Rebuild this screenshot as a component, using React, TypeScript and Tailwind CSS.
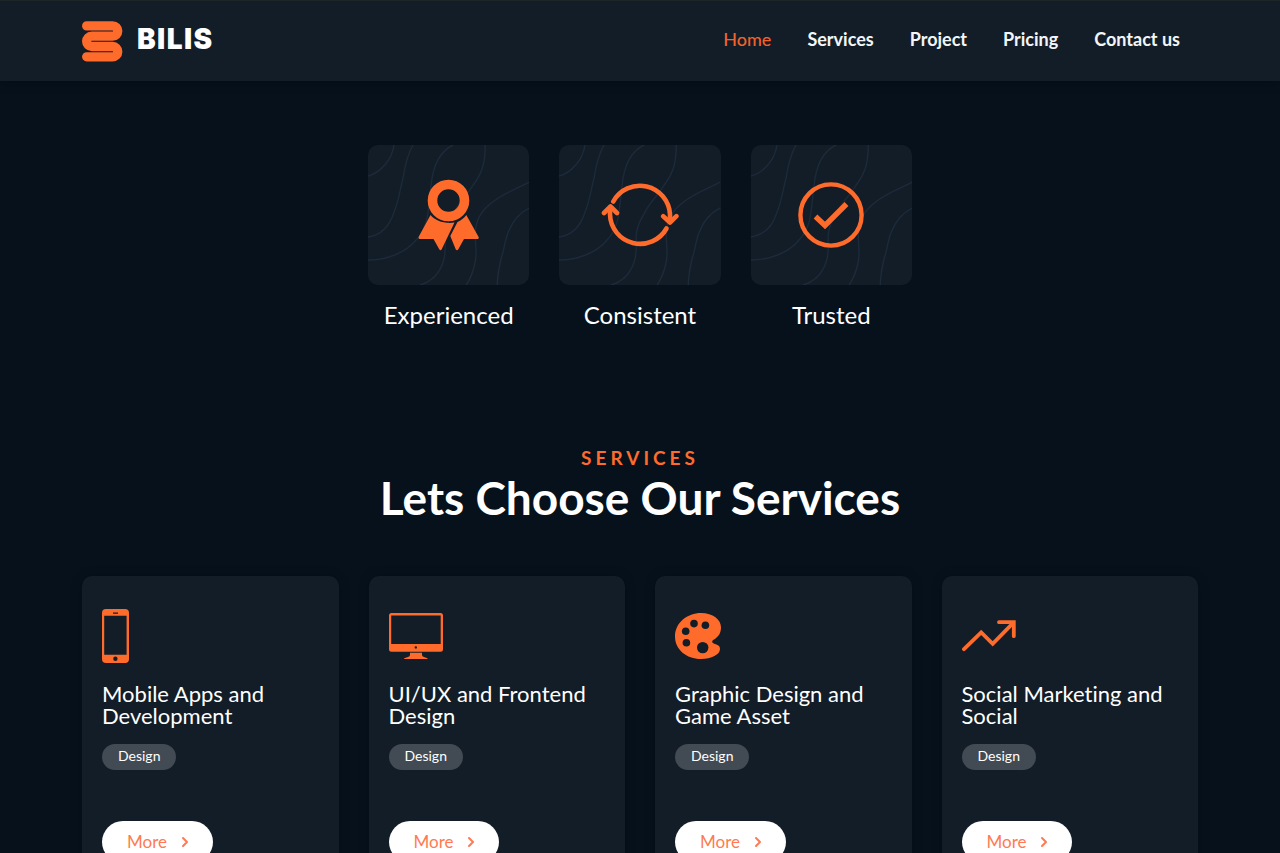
import type { ReactNode } from "react";
import { ChevronRight } from "lucide-react";

const navLinks = ["Home", "Services", "Project", "Pricing", "Contact us"];

function Logo() {
  return (
    <svg width="41" height="41" viewBox="0 0 41 41" fill="none" aria-hidden="true">
      <path
        d="M4.700 4.900H30.600a5.150 5.150 0 0 1 0 10.300H9.800a5.150 5.150 0 0 0 0 10.300H30.600a5.150 5.150 0 0 1 0 10.300H4.700"
        stroke="#ff6b2b"
        strokeWidth="9.300"
        strokeLinecap="round"
      />
    </svg>
  );
}

function Contours() {
  return (
    <svg
      className="absolute inset-0 h-full w-full"
      viewBox="0 0 161 140"
      preserveAspectRatio="none"
      fill="none"
      stroke="#1c2a3a"
      strokeWidth="1.400"
      aria-hidden="true"
    >
      <path d="M0 31C12 28 24 15 26 0" />
      <path d="M0 92C14 90 22 80 26 67C31 55 32 44 35 33C37 20 39 10 45 0" />
      <path d="M0 115C20 115 38 107 48 95C62 80 60 60 63 40C65 20 72 6 85 0" />
      <path d="M117 0C117 18 114 28 105 40C99 50 91 57 87 65C82 74 78 80 77 90C77 105 78 108 75 117C71 129 62 137 52 140" />
      <path d="M161 37C148 44 135 48 123 58C112 67 107 76 107 90C107 100 109 108 107 117C105 127 102 134 98 140" />
      <path d="M161 63C150 68 144 77 140 87C136 97 136 105 133 113C131 122 129 130 129 140" />
    </svg>
  );
}

function AwardIcon() {
  return (
    <svg width="61" height="72" viewBox="0 0 61 72" aria-hidden="true">
      <circle cx="30.500" cy="21.500" r="16" fill="none" stroke="#ff6b2b" strokeWidth="9.600" />
      <path
        d="M12.500 36C17 41.500 26 45 36.500 43.600L23.600 70.500Q22.500 72 21.400 70.500L15.500 60H1.500Q0 59.500 .6 58Z"
        fill="#ff6b2b"
      />
      <path
        d="M48.300 36C46 39 43 41.600 39.500 42.900L32.300 57L37.800 70.500Q39 72 40.200 70.500L46 60H59.800Q61.300 59.500 60.600 58Z"
        fill="#ff6b2b"
      />
    </svg>
  );
}

function CycleIcon() {
  return (
    <svg
      width="78"
      height="66"
      viewBox="0 0 78 66"
      fill="none"
      stroke="#ff6b2b"
      strokeWidth="4.600"
      strokeLinecap="round"
      strokeLinejoin="round"
      aria-hidden="true"
    >
      <path d="M12.300 19.500A30.200 30.200 0 0 1 69 32.500V40" />
      <path d="M62.200 34.200L69 40.500L75.400 34.200" />
      <path d="M65.500 46.500A30.200 30.200 0 0 1 9 32.500V26" />
      <path d="M3 31L9.500 24.500L16 31" />
    </svg>
  );
}

function CheckIcon() {
  return (
    <svg width="66" height="66" viewBox="0 0 66 66" fill="none" stroke="#ff6b2b" aria-hidden="true">
      <circle cx="33" cy="33" r="30.600" strokeWidth="4.400" />
      <path d="M17.500 34.500L27 43.500L48.500 22" strokeWidth="5.400" />
    </svg>
  );
}

function PhoneIcon() {
  return (
    <svg width="27" height="54" viewBox="0 0 27 54" aria-hidden="true">
      <path
        fill="#ff6b2b"
        fillRule="evenodd"
        d="M4 0H23Q27 0 27 4V50Q27 54 23 54H4Q0 54 0 50V4Q0 0 4 0ZM2.200 6.800V45.800H24.600V6.800ZM11 3.600V4.700H16V3.600ZM13.400 47.600A2.200 2.200 0 1 0 13.400 52A2.200 2.200 0 1 0 13.400 47.600Z"
      />
    </svg>
  );
}

function MonitorIcon() {
  return (
    <svg width="54" height="46" viewBox="0 0 54 46" fill="#ff6b2b" aria-hidden="true">
      <path
        fillRule="evenodd"
        d="M2.500 0H51.500Q54 0 54 2.500V36.200Q54 38.700 51.500 38.700H2.500Q0 38.700 0 36.200V2.500Q0 0 2.500 0ZM2.200 2.500V31H51.700V2.500ZM26.800 33.200A1.200 1.200 0 1 0 26.800 35.600A1.200 1.200 0 1 0 26.800 33.200Z"
      />
      <path d="M21 39.800H33V42Q33 43.300 35 44L38.500 45.300V46H15.200V45.300L19 44Q21 43.300 21 42Z" />
    </svg>
  );
}

function PaletteIcon() {
  return (
    <svg width="46" height="46" viewBox="0 0 46 46" aria-hidden="true">
      <path
        d="M26 0C38 0 46 6.500 46 14.500C46 21 42.500 24.500 38.500 26.800C36.500 28 36.800 29.600 38.800 30.600C41.500 32 45 32 45 36C45 41.500 36.500 46 26 46C11.500 46 0 36.500 0 23.500C0 9.500 12.500 0 26 0Z"
        fill="#ff6b2b"
      />
      <g fill="#131d28">
        <circle cx="19" cy="10.600" r="3.800" />
        <circle cx="30.400" cy="12.200" r="3.800" />
        <circle cx="10.700" cy="18.300" r="3.800" />
        <circle cx="11.400" cy="29.700" r="3.800" />
        <circle cx="27.700" cy="34.600" r="5.700" />
      </g>
    </svg>
  );
}

function TrendIcon() {
  return (
    <svg
      width="54"
      height="32"
      viewBox="0 0 54 32"
      fill="none"
      stroke="#ff6b2b"
      strokeWidth="3.800"
      strokeLinecap="round"
      aria-hidden="true"
    >
      <path d="M2 29.200L19.200 12.500L30.700 23.800L51 3.200" />
      <path d="M37 2.200H51.800V16.200" />
    </svg>
  );
}

const features: { label: string; icon: ReactNode }[] = [
  { label: "Experienced", icon: <AwardIcon /> },
  { label: "Consistent", icon: <CycleIcon /> },
  { label: "Trusted", icon: <CheckIcon /> },
];

const services: { title: string; icon: ReactNode }[] = [
  { title: "Mobile Apps and Development", icon: <PhoneIcon /> },
  { title: "UI/UX and Frontend Design", icon: <MonitorIcon /> },
  { title: "Graphic Design and Game Asset", icon: <PaletteIcon /> },
  { title: "Social Marketing and Social", icon: <TrendIcon /> },
];

export default function App() {
  return (
    <div className="min-h-screen bg-[#06111c] font-['Lato',sans-serif] text-white [font-variant-ligatures:none]">
      <header className="border-t border-[#1e2529] bg-[#131d28] shadow-[0_2px_10px_rgba(0,0,0,0.25)]">
        <div className="mx-auto flex h-20 w-full max-w-[1140px] items-center justify-between px-3">
          <a href="#" className="flex items-center gap-3.5">
            <Logo />
            <span className="pb-1 font-['Inter',sans-serif] text-[28px] leading-8 font-black tracking-wider">BILIS</span>
          </a>
          <nav className="flex pb-1 text-lg leading-6 font-bold">
            {navLinks.map((link) => (
              <a
                key={link}
                href="#"
                className={link === "Home" ? "px-[18px] font-medium text-[#f2622a]" : "px-[18px] text-[#f3f5f7]"}
              >
                {link}
              </a>
            ))}
          </nav>
        </div>
      </header>

      <main>
        <section className="mx-auto grid w-full max-w-[568px] grid-cols-3 gap-[30px] px-3 pt-16">
          {features.map((feature) => (
            <div key={feature.label} className="flex flex-col items-center gap-4">
              <div className="relative flex h-[140px] w-full items-center justify-center overflow-hidden rounded-[10px] bg-[#131d28]">
                <Contours />
                <div className="relative">{feature.icon}</div>
              </div>
              <h3 className="text-2xl leading-7">{feature.label}</h3>
            </div>
          ))}
        </section>

        <section className="mx-auto w-full max-w-[1140px] px-3 pt-[117px] pb-16">
          <div className="text-center">
            <p className="text-[19px] leading-6 font-bold tracking-[4px] text-[#ff6b2b]">SERVICES</p>
            <h2 className="text-[46px] leading-[56px] font-bold">Lets Choose Our Services</h2>
          </div>
          <div className="grid grid-cols-4 gap-[30px] pt-[50px]">
            {services.map((service) => (
              <article
                key={service.title}
                className="flex flex-col items-start rounded-[10px] bg-[#131d28] px-5 pt-[33px] pb-10 shadow-[0_0_12px_rgba(0,0,0,0.2)]"
              >
                <div className="flex h-[54px] items-center">{service.icon}</div>
                <h3 className="pt-5 text-[22px] leading-[22px]">{service.title}</h3>
                <span className="mt-[17px] rounded-full bg-[#424b54] px-4 pb-0.5 text-sm leading-6">Design</span>
                <button
                  type="button"
                  className="mt-[51px] flex h-[42px] items-center gap-2.5 rounded-full bg-white pr-5 pl-[25px] text-[17px] text-[#ff7a52]"
                >
                  More
                  <ChevronRight size={16} strokeWidth={3} aria-hidden="true" />
                </button>
              </article>
            ))}
          </div>
        </section>
      </main>
    </div>
  );
}
